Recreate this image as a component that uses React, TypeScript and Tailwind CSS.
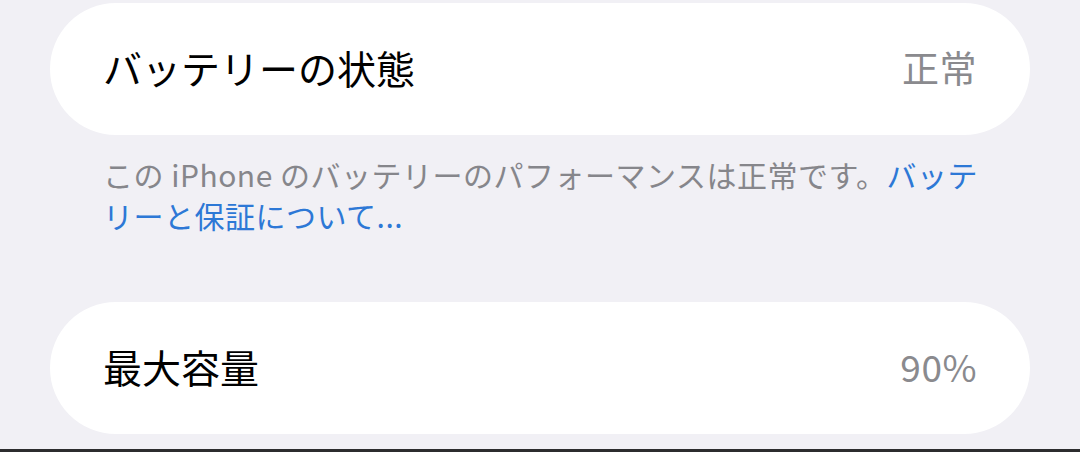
const font = "font-['Noto_Sans_CJK_JP','Noto_Sans',sans-serif]";

function Row({ label, value }: { label: string; value: string }) {
  return (
    <div className="flex h-[132px] items-center justify-between rounded-[66px] bg-white px-[53px] pb-[3px]">
      <span className="text-[39px] leading-none text-black">{label}</span>
      <span className="text-[37px] leading-none tracking-[0.5px] text-[#8a8a8e]">{value}</span>
    </div>
  );
}

export default function App() {
  return (
    <main className={`h-[452px] w-[1080px] overflow-hidden bg-[#f1f0f5] ${font}`}>
      <div className="flex h-[449px] flex-col px-[50px] pt-[3px]">
        <Row label="バッテリーの状態" value="正常" />

        <div className="mt-[19px] px-[53px] text-[30px] leading-[41px] tracking-[0.5px] text-[#86868b]">
          <p className="whitespace-nowrap">
            この iPhone のバッテリーのパフォーマンスは正常です。<span className="text-[#2d78d6]">バッテ</span>
          </p>
          <p className="whitespace-nowrap text-[#2d78d6]">リーと保証について...</p>
        </div>

        <div className="mt-[66px]">
          <Row label="最大容量" value="90%" />
        </div>
      </div>
      <div className="h-[3px] bg-[#2c2c2e]" />
    </main>
  );
}
